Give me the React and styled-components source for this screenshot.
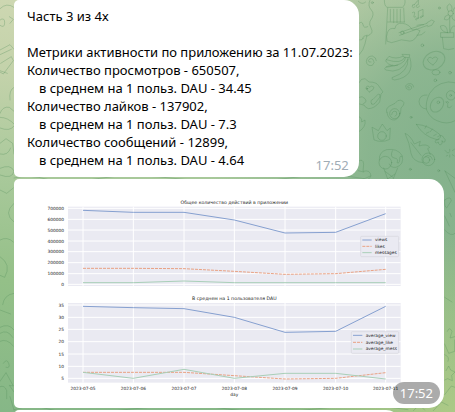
import React from "react";
import styled, { createGlobalStyle } from "styled-components";

const GlobalStyle = createGlobalStyle`
  * { box-sizing: border-box; }
  body { margin: 0; overflow: hidden; }
`;

const Chat = styled.main`
  position: relative;
  min-height: 100vh;
  max-height: 100vh;
  overflow: hidden;
  font-family: "Noto Sans", "Open Sans", sans-serif;
  font-size: 13px;
  line-height: 18px;
  color: #000;
  background:
    radial-gradient(circle at 100% 105%, #b0cb86 0%, rgba(176, 203, 134, 0) 32%),
    radial-gradient(circle at 102% 36%, #83b18c 0%, rgba(131, 177, 140, 0.85) 18%, rgba(131, 177, 140, 0) 48%),
    linear-gradient(180deg, #cdd7b1 0%, #c3d2aa 18%, #a9c99b 42%, #94c088 68%, #86b787 100%);
`;

const Wallpaper = styled.svg`
  position: absolute;
  inset: 0;
  width: 100%;
  height: 100%;
  fill: none;
  stroke: #4f8a58;
  stroke-opacity: 0.3;
  stroke-width: 3;
  stroke-linecap: round;
  stroke-linejoin: round;
`;

const MessageList = styled.div`
  position: relative;
  display: flex;
  flex-direction: column;
  align-items: flex-start;
  gap: 2px;
  padding: 0 11px 0 14px;
`;

const Bubble = styled.article`
  position: relative;
  background: #fff;
  border-radius: 5px 15px 15px 5px;
`;

const TextBubble = styled(Bubble)`
  padding: 7px 6px 8px 13px;
`;

const PhotoBubble = styled(Bubble)`
  width: 100%;
  overflow: hidden;
`;

const NextBubble = styled(Bubble)`
  width: 90%;
  height: 40px;
`;

const Line = styled.p`
  margin: 0;
  min-height: 18px;
  padding-left: ${({ $indent }) => ($indent ? "12px" : "0")};
`;

const Time = styled.time`
  position: absolute;
  right: 10px;
  bottom: 3px;
  color: #a0acb6;
`;

const TimeBadge = styled.time`
  position: absolute;
  right: 4px;
  bottom: 4px;
  padding: 2px 7px;
  border-radius: 11px;
  background: rgba(0, 0, 0, 0.33);
  color: #fff;
`;

const ChartSvg = styled.svg`
  display: block;
  width: 100%;
  height: auto;
  font-family: "DejaVu Sans", sans-serif;
  font-size: 13px;
  fill: #222;
`;

const ChartTitle = styled.text`
  font-size: 14px;
  text-anchor: middle;
`;

const Label = styled.text`
  text-anchor: ${({ $anchor }) => $anchor || "start"};
`;

const Series = styled.polyline`
  fill: none;
  stroke: ${({ $color }) => $color};
  stroke-width: 3;
  stroke-dasharray: ${({ $dashed }) => ($dashed ? "9 3" : "none")};
`;

const BLUE = "#86a0d0";
const ORANGE = "#e9a284";
const GREEN = "#a9cfb8";

const DAYS = [207, 358, 510, 661, 813, 965, 1115];
const DATES = ["05", "06", "07", "08", "09", "10", "11"].map((d) => `2023-07-${d}`);

const PLOTS = [
  {
    title: "Общее количество действий в приложении",
    titleY: 74,
    top: 83,
    height: 238,
    ticks: [["700000", 88], ["600000", 121], ["500000", 153], ["400000", 186], ["300000", 218], ["200000", 251], ["100000", 284], ["0", 316]],
    legend: { x: 1040, y: 172, w: 114, h: 61, rows: [183, 202, 221] },
    series: [
      { name: "views", color: BLUE, ys: [94, 100, 100, 123, 162, 160, 104] },
      { name: "likes", color: ORANGE, dashed: true, ys: [268, 268, 269, 277, 286, 284, 271] },
      { name: "messages", color: GREEN, ys: [311, 311, 306, 311, 311, 311, 311] },
    ],
  },
  {
    title: "В среднем на 1 пользователя DAU",
    titleY: 363,
    top: 372,
    height: 239,
    ticks: [["35", 378], ["30", 415], ["25", 451], ["20", 488], ["15", 525], ["10", 562], ["5", 598]],
    legend: { x: 1012, y: 458, w: 142, h: 65, rows: [469, 490, 510] },
    series: [
      { name: "average_view", color: BLUE, ys: [382, 386, 389, 415, 460, 457, 382] },
      { name: "average_like", color: ORANGE, dashed: true, ys: [580, 580, 580, 590, 600, 598, 581] },
      { name: "average_mess", color: GREEN, ys: [580, 598, 571, 598, 583, 583, 600] },
    ],
  },
];

function Plot({ title, titleY, top, height, ticks, legend, series }) {
  return (
    <g>
      <ChartTitle x="661" y={titleY}>{title}</ChartTitle>
      <rect x="162" y={top} width="998" height={height} fill="#eaeaf2" />
      <g stroke="#fff" strokeWidth="3">
        {DAYS.map((x) => <line key={x} x1={x} x2={x} y1={top} y2={top + height} />)}
        {ticks.map(([, y]) => <line key={y} x1="162" x2="1160" y1={y} y2={y} />)}
      </g>
      {ticks.map(([label, y]) => <Label key={label} $anchor="end" x="150" y={y + 5}>{label}</Label>)}
      {series.map((s) => (
        <Series key={s.name} $color={s.color} $dashed={s.dashed} points={s.ys.map((y, i) => `${DAYS[i]},${y}`).join(" ")} />
      ))}
      <rect x={legend.x} y={legend.y} width={legend.w} height={legend.h} rx="3" fill="#eaeaf2" stroke="#d5d5dd" strokeWidth="2" />
      {series.map((s, i) => (
        <g key={s.name}>
          <Series $color={s.color} $dashed={s.dashed} points={`${legend.x + 5},${legend.rows[i]} ${legend.x + 33},${legend.rows[i]}`} />
          <Label x={legend.x + 43} y={legend.rows[i] + 4}>{s.name}</Label>
        </g>
      ))}
    </g>
  );
}

function ActivityChart() {
  return (
    <ChartSvg viewBox="0 0 1290 687" role="img" aria-label="Графики активности">
      {PLOTS.map((plot) => <Plot key={plot.title} {...plot} />)}
      {DATES.map((date, i) => <Label key={date} $anchor="middle" x={DAYS[i]} y="632">{date}</Label>)}
      <Label $anchor="middle" x="661" y="651">day</Label>
    </ChartSvg>
  );
}

function Doodles() {
  return (
    <Wallpaper viewBox="0 0 1365 1236" preserveAspectRatio="xMaxYMin slice" aria-hidden="true">
      <g transform="translate(1065 0)">
        {/* beard and melting shape */}
        <path d="M10 4q12 12 22 2M45 0q-8 18 4 30t-4 34q-4 8 4 22t-12 22q-12-4-14 8M12 70q10-8 12 4t14 6M12 165q14-14 18-34l6-26M14 120q8 2 12-6" />
        {/* guitar player */}
        <path d="M88 0q0 18 8 22h46q10-6 8-22M98 24l-6 108M146 24l2 42M106 28v36M116 28v40M126 28v40M136 28v38M98 66h50M96 124q14 8 28 0t32-2 30-14 8-16q-8-8-22-2-10-18-30-20t-22 16q-16-4-22 10t-2 26M132 98l84-28M134 106l84-30M216 68l14-8 8 4-8 12-12 4M186 76q14-4 20-2M186 106q14 2 24-10" />
        <circle cx="142" cy="98" r="5" />
        {/* notes */}
        <path d="M178 14l10-12M178 14q-8-2-6 6t8 0M190 0v14q-8 0-6 6t10-2M190 54V34l14-6v20M190 54q-8-2-8 4t8-4M204 48q-8-2-8 4t8-4M172 38q10-6 6 6t4 6" />
        <circle cx="52" cy="8" r="3" /><circle cx="253" cy="24" r="3" /><circle cx="202" cy="136" r="4" />
        {/* potted plant */}
        <path d="M258 98h38v14h-38zM262 112l4 34q14 6 30 0M278 98q-2-28-22-20 2 18 22 20M284 96V48M286 96q2-20 14-18" />
        <circle cx="287" cy="40" r="8" />
        <path d="M280 34q-10-16 4-22 10 6 6 20M294 34q2-12 6-12M280 44q-14 4-12 14 12 6 18-8M290 48q0 12 10 14" />
        {/* swirls */}
        <path d="M48 186q-8 2-8-4 4-10 14-4 8 10-2 18-16 4-18-12 2-16 18-16 12 4 12 14M164 264q-7 2-6-5 5-6 11 0 3 9-7 11-11-2-10-13 6-8 16-6 8 3 8 10" />
        {/* bananas */}
        <path d="M142 163l22 1-1 9-14-1zM149 172q-8 22-55 7-4 4 0 7 12 14 34 10M152 173q0 22-60 29-6 4 0 8 46 14 67-32M159 174q4 42-48 59-2 6 8 7 62-10 46-66M94 179l8-10q20 10 42 0M112 196q-12 2-18 4" />
        {/* heart speech bubble */}
        <ellipse cx="237" cy="182" rx="34" ry="26" transform="rotate(-28 237 182)" />
        <path d="M234 195q-18-10-16-18 8-10 14-1 10-10 16 0-1 8-14 19" />
        <ellipse cx="243" cy="217" rx="12" ry="8" /><circle cx="241" cy="241" r="4" /><circle cx="285" cy="218" r="4" />
        {/* toaster */}
        <path d="M12 248q6-14 18-12l12 10q22 0 28 10l14 20-6 6-4 24q-16 20-34 20-10-4-12-10l-14-4M50 312q-6-12 4-14l16-16q8 0 4 10l-14 18q-6 6-10 2M43 276q-16-12-6-18 6 0 6 4 8-8 14 0 0 8-14 14M12 292q10-6 18 4t-6 16" />
        <circle cx="36" cy="266" r="2" />
        {/* avocado */}
        <path d="M96 338q-6-12 8-20 20-8 24-16 8-4 16 2t-6 20q0 28-18 36-20 2-24-22" />
        <circle cx="119" cy="341" r="15" /><path d="M110 344q2-14 14-9 6 10-4 14" /><circle cx="168" cy="352" r="3" />
        {/* panda */}
        <path d="M300 248q-20-6-42 3-20 7-34 29-14 28-9 50 10 24 31 32 30 14 54 0M216 285q-22-2-24 20 2 20 22 22" />
        <ellipse cx="246" cy="314" rx="18" ry="24" transform="rotate(34 246 314)" />
        <circle cx="250" cy="307" r="4" /><circle cx="288" cy="286" r="14" /><circle cx="287" cy="286" r="3" />
        <path d="M273 306q8-4 8 2-4 6-8-2M278 322q8 6 12-4M278 314v6" />
        {/* crown */}
        <path d="M52 382l18 10 12-20 14 20 10-8-2 34q-24 12-46 2z" /><circle cx="81" cy="408" r="13" />
        {/* carrot */}
        <path d="M184 373q36 2 70 30 8 10-8 16-42-10-62-46M214 377l-4 8M232 387l-6 8M214 400l8-4M244 403l-8 4M248 410q14-8 17 2 10 8 4 14-8 2-8-4 2 14-7 12-4-2-4-8-8 6-10 0t12-8" />
        {/* comet */}
        <path d="M204 488q-30-2-36-28-4-30-18-60 16 6 28 32l18-8-4 14q24-8 32 4l-6 4 8 18M168 428l30 38" />
        <circle cx="220" cy="478" r="19" /><circle cx="214" cy="480" r="10" /><path d="M210 470q8-8 18 0l4 8" />
        {/* ice cream */}
        <circle cx="91" cy="488" r="19" /><path d="M73 480q-2-24 22-31 32-5 46 17 8 28-18 36-16 2-20-10M112 452q-8 20 6 22t8 14q8 4 8-10t8-8M86 504l20 54 22-54M90 514l24 18M120 522l-24 16" />
        {/* sparkle */}
        <path d="M284 448v6M276 458h6M284 465v6M292 452l6-4M292 464l6 4M270 452l4 2M274 468l4-2" />
        <circle cx="166" cy="508" r="3" /><circle cx="251" cy="512" r="3" />
        {/* cone and foliage */}
        <path d="M270 513l30 64M270 513l30 22M10 350q12 2 10 16l10-6q4 22-20 36M10 484q14-10 16 8l-2 22q22-6 24 14-6 16-36 16M10 512l16 4M20 540l26-12" />
      </g>
      {/* left margin */}
      <path d="M0 26q20-20 42-4M0 60q14-10 14 8t-14 8M28 50l12 8-10 12M0 150l30-16 12 14M0 164l34-16M2 190l32-20 6 12-30 40-10-6M0 212l22 8M42 262q-16 8-12 38M0 340q8-22 28-18l14 12M0 352q24 0 42 20M0 384q30 12 42-6M0 430l18-14 20 14 4 32M0 462q24 6 32-18M0 505q32-14 42 8-4 26-42 12M0 570l20 10 20-16M42 610q-34 30 0 56M0 720q22-12 40 6M0 770q36 24 14 62l-14-6M42 880q-30 4-34 34M0 930l32 12M0 982q26-14 42 8M0 1000q22-14 38 12M0 1024q20-10 40 14M10 1090q10-16 16 0t-8 12M0 1144l18-26 22 40-12-2 14 20M0 1160q14-6 20 12v24M30 1190l12 40" />
      {/* right margin */}
      <path d="M1334 600q18-14 20 2l-14 22q-8-4-6-24M1334 648l14 30M1350 640l4 10M1334 690q20 22 31 10M1334 892l22 14M1342 994q6-16 14 0l-6 20 14-4M1334 1032l12 28 18-6V1020M1334 1064q16 6 10 20M1338 1112l8-14 6 12 13 6-10 10 2 16-14-6-9 4M1334 1184l20-26 11 4M1300 1232l24-26 20 10M1240 1232q18-24 34-2" />
      {/* gaps between messages */}
      <path d="M42 534q44-12 100 4t150-2 260 2 300-2 240 0M42 1229q52-18 112 0t240-2 290 0 260 0 280 2" />
    </Wallpaper>
  );
}

export default function App() {
  return (
    <Chat>
      <GlobalStyle />
      <Doodles />
      <MessageList>
        <TextBubble>
          <Line>Часть 3 из 4х</Line>
          <Line />
          <Line>Метрики активности по приложению за 11.07.2023:</Line>
          <Line>Количество просмотров - 650507,</Line>
          <Line $indent>в среднем на 1 польз. DAU - 34.45</Line>
          <Line>Количество лайков - 137902,</Line>
          <Line $indent>в среднем на 1 польз. DAU - 7.3</Line>
          <Line>Количество сообщений - 12899,</Line>
          <Line $indent>в среднем на 1 польз. DAU - 4.64</Line>
          <Time>17:52</Time>
        </TextBubble>
        <PhotoBubble>
          <ActivityChart />
          <TimeBadge>17:52</TimeBadge>
        </PhotoBubble>
        <NextBubble />
      </MessageList>
    </Chat>
  );
}
